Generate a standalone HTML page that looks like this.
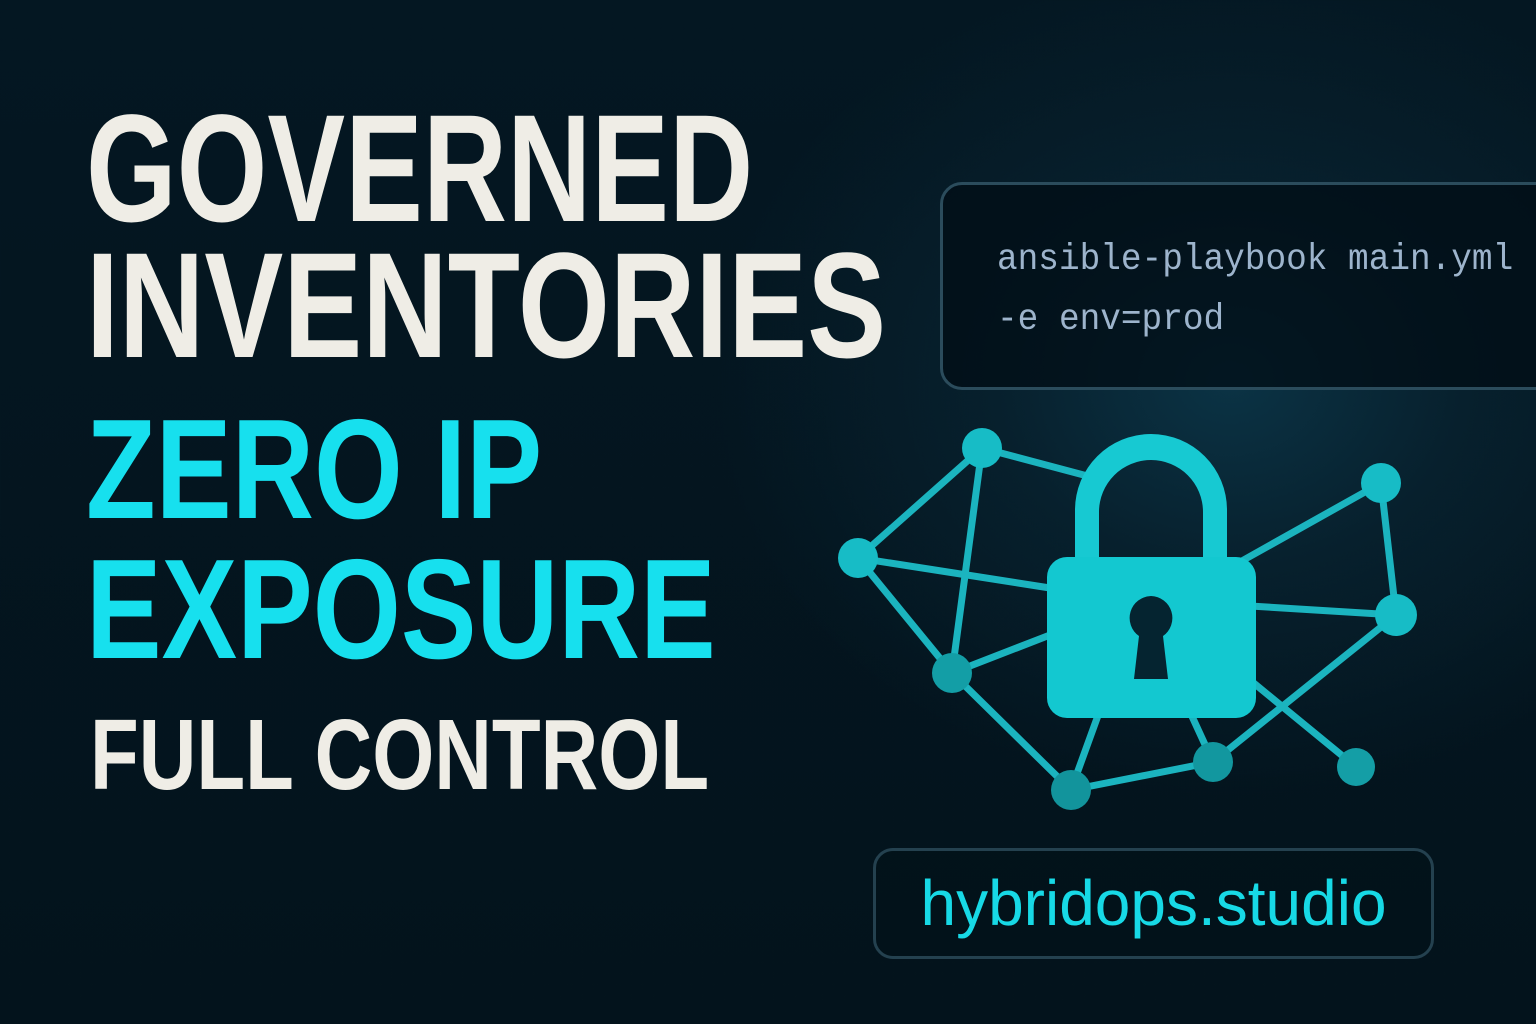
<!DOCTYPE html>
<html><head><meta charset="utf-8"><style>
html,body{margin:0;padding:0}
body{width:1536px;height:1024px;overflow:hidden;position:relative;
background:radial-gradient(ellipse 520px 420px at 1230px 380px,#0b3345 0%,#07202d 45%,rgba(4,19,28,0) 100%),linear-gradient(180deg,#041722 0%,#03131c 100%);
font-family:"Liberation Sans",sans-serif}
.t{position:absolute;left:86px;font-weight:bold;white-space:nowrap;transform-origin:0 0;line-height:1}
.w{color:#efede6}.c{color:#17e0ee}
.code{position:absolute;left:940px;top:182px;width:640px;height:202px;border:3px solid #2b4c5c;border-radius:22px;background:rgba(2,14,22,.75)}
.code div{position:absolute;left:54px;font-family:"Liberation Mono",monospace;font-size:37px;color:#9db4cc;white-space:nowrap;transform:scaleX(.93);transform-origin:0 0}
.dom{position:absolute;left:873px;top:848px;width:555px;height:105px;border:3px solid #24414f;border-radius:20px;background:rgba(3,18,26,.7);text-align:center;line-height:105px;font-size:64px;color:#17d9e6}
</style></head><body>
<div class="t w" style="top:92px;font-size:153px;transform:scaleX(.762)">GOVERNED</div>
<div class="t w" style="top:230px;font-size:150px;transform:scaleX(.789)">INVENTORIES</div>
<div class="t c" style="top:399px;font-size:142px;transform:scaleX(.803)">ZERO IP</div>
<div class="t c" style="top:539px;font-size:142px;transform:scaleX(.798)">EXPOSURE</div>
<div class="t w" style="top:705px;font-size:100px;transform:scaleX(.798);left:90px">FULL CONTROL</div>
<div class="code"><div style="top:54px">ansible-playbook main.yml</div><div style="top:114px">-e env=prod</div></div>
<svg style="position:absolute;left:0;top:0" width="1536" height="1024">
<g stroke="#1bb4bf" stroke-width="7" stroke-linecap="round">
<line x1="982" y1="448" x2="858" y2="558"/><line x1="982" y1="448" x2="952" y2="673"/><line x1="982" y1="448" x2="1095" y2="478"/>
<line x1="858" y1="558" x2="1050" y2="588"/><line x1="858" y1="558" x2="952" y2="673"/><line x1="952" y1="673" x2="1071" y2="790"/>
<line x1="952" y1="673" x2="1050" y2="635"/><line x1="1071" y1="790" x2="1100" y2="710"/><line x1="1071" y1="790" x2="1213" y2="762"/>
<line x1="1213" y1="762" x2="1190" y2="712"/><line x1="1213" y1="762" x2="1396" y2="615"/><line x1="1356" y1="767" x2="1250" y2="680"/>
<line x1="1250" y1="606" x2="1396" y2="615"/><line x1="1240" y1="562" x2="1381" y2="483"/><line x1="1381" y1="483" x2="1396" y2="615"/>
</g>
<g fill="#17bcc6">
<circle cx="982" cy="448" r="20"/><circle cx="858" cy="558" r="20"/><circle cx="952" cy="673" r="20" fill="#139ea6"/><circle cx="1071" cy="790" r="20" fill="#12949c"/>
<circle cx="1213" cy="762" r="20" fill="#12979f"/><circle cx="1356" cy="767" r="19" fill="#149ea6"/><circle cx="1396" cy="615" r="21"/><circle cx="1381" cy="483" r="20"/>
</g>
<path d="M1075 560 V510 A76 76 0 0 1 1227 510 V560 H1203 V512 A52 52 0 0 0 1099 512 V560 Z" fill="#17c9d2"/>
<rect x="1047" y="557" width="209" height="161" rx="20" fill="#13c8d0"/>
<path d="M1151 596 a22 22 0 0 0 -12 40 l-5 43 h34 l-5 -43 a22 22 0 0 0 -12 -40z" fill="#052430"/>
</svg>
<div class="dom">hybridops.studio</div>
</body></html>
